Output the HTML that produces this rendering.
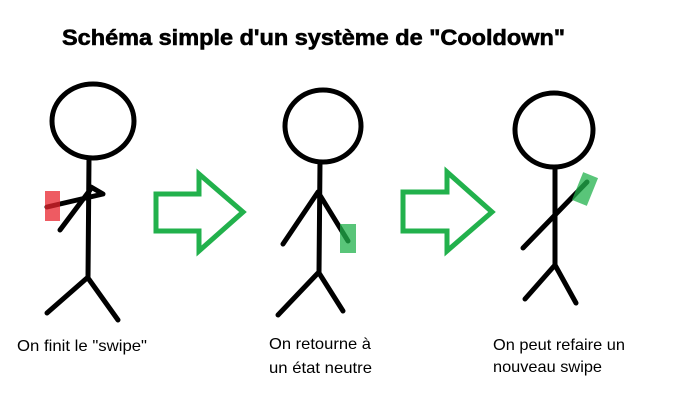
<!DOCTYPE html>
<html><head><meta charset="utf-8"><style>html,body{margin:0;padding:0;background:#fff;}svg{display:block}</style></head>
<body>
<svg width="675" height="409" viewBox="0 0 675 409" xmlns="http://www.w3.org/2000/svg">
<rect width="675" height="409" fill="#fff"/>
<text x="62" y="45" font-family="Liberation Sans, sans-serif" font-weight="bold" font-size="22" stroke="#000" stroke-width="0.6" textLength="503" lengthAdjust="spacingAndGlyphs">Schéma simple d'un système de "Cooldown"</text>
<g fill="none" stroke="#000" stroke-width="5" stroke-linecap="round" stroke-linejoin="round">
<ellipse cx="93" cy="121" rx="41" ry="37"/>
<path d="M89 158 L88 278 M87 278 L47 313 M88 278 L118 320 M47 207 L103 194 L91 187 M90 190 L60 230"/>
<ellipse cx="323" cy="126" rx="38" ry="36"/>
<path d="M320 162 L319 273 M318 273 L278 315 M319 273 L343 311 M318 192 L283 244 M318 192 L348 241"/>
<ellipse cx="554" cy="130" rx="39" ry="37"/>
<path d="M555 167 L555 265 M555 265 L525 299 M555 265 L576 303 M523 248 L587 182"/>
</g>
<rect x="45" y="191" width="15" height="30" fill="#e8242e" opacity="0.75"/>
<rect x="340" y="224" width="16" height="29" fill="#22b14c" opacity="0.75"/>
<rect x="577" y="174" width="16" height="30" fill="#22b14c" opacity="0.75" transform="rotate(22 585 189)"/>
<g fill="none" stroke="#22b14c" stroke-width="5" stroke-linejoin="miter">
<path d="M156 194 L199 194 L199 174 L243 212 L199 251 L199 231 L156 231 Z"/>
<path d="M403 192 L447 192 L447 172 L492 212 L447 251 L447 231 L403 231 Z"/>
</g>
<g font-family="Liberation Sans, sans-serif" font-size="16" fill="#000">
<text x="17" y="351" textLength="130" lengthAdjust="spacingAndGlyphs">On finit le "swipe"</text>
<text x="269" y="349" textLength="102" lengthAdjust="spacingAndGlyphs">On retourne à</text>
<text x="269" y="373" textLength="103" lengthAdjust="spacingAndGlyphs">un état neutre</text>
<text x="493" y="350" textLength="132" lengthAdjust="spacingAndGlyphs">On peut refaire un</text>
<text x="493" y="372" textLength="109" lengthAdjust="spacingAndGlyphs">nouveau swipe</text>
</g>
</svg>
</body></html>
